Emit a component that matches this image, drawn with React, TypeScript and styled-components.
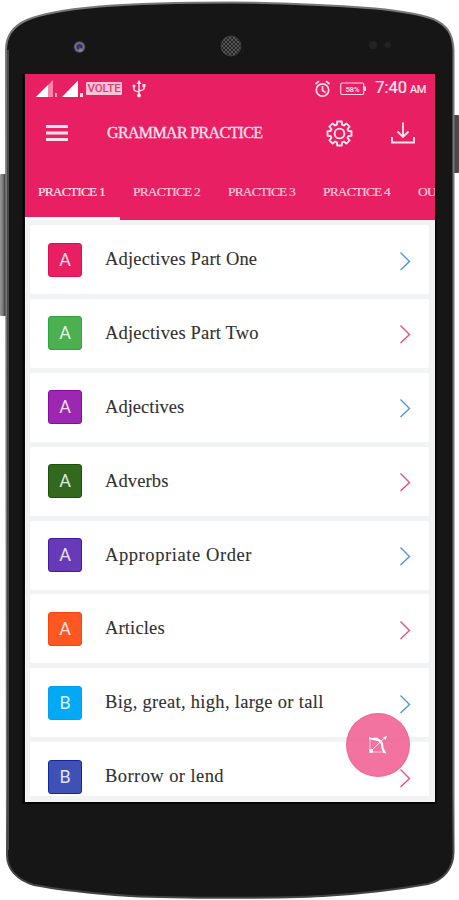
import React from "react";
import styled, { createGlobalStyle } from "styled-components";

const GlobalStyle = createGlobalStyle`
  * { box-sizing: border-box; }
  body { margin: 0; background: #fff; overflow: hidden; }
`;

const PINK = "#e91f63";

const Stage = styled.main`
  position: relative;
  width: 459px;
  height: 900px;
  padding: 74px 24px 0 25px;
  overflow: hidden;
  background: #fff;
`;

/* The handset lies behind the screen. */
const Handset = styled.svg`
  position: absolute;
  inset: 0;
`;

const Screen = styled.section`
  position: relative;
  display: flex;
  flex-direction: column;
  width: 410px;
  height: 728px;
  overflow: hidden;
  background: #f1f3f4;
  font-family: "Liberation Serif", serif;
`;

const Header = styled.header`
  display: flex;
  flex-direction: column;
  flex: none;
  height: 146px;
  background: ${PINK};
  color: #ffe3ec;
`;

const StatusBar = styled.div`
  display: flex;
  align-items: center;
  justify-content: space-between;
  height: 29px;
  padding: 0 9px 0 11px;
`;

const StatusGroup = styled.div<{ $gap: number; $indent?: number }>`
  display: flex;
  align-items: center;
  gap: ${(p) => p.$gap}px;
  padding-left: ${(p) => p.$indent ?? 0}px;
`;

const NetworkBadge = styled.span`
  width: 36px;
  height: 13px;
  border-radius: 1px;
  background: #fbc3d6;
  color: #e23b74;
  font: 500 11.5px/13.5px Roboto, sans-serif;
  letter-spacing: -0.1px;
  text-align: center;
`;

const Clock = styled.time`
  font: 400 16.5px/20px Roboto, sans-serif;
  letter-spacing: 0;
  color: #ffe9f0;
  -webkit-text-stroke: 0.2px;
`;

const Meridiem = styled.small`
  margin-left: 3px;
  font-size: 11px;
  letter-spacing: -0.4px;
`;

const Toolbar = styled.div`
  display: flex;
  align-items: center;
  height: 60px;
  padding: 0 20px 0 21px;
`;

const Title = styled.h1`
  flex: 1;
  margin: 0 0 0 39px;
  font-size: 16px;
  font-weight: 400;
  line-height: 20px;
  letter-spacing: -0.65px;
  -webkit-text-stroke: 0.3px;
  white-space: nowrap;
`;

const IconButton = styled.button<{ $right?: number }>`
  display: flex;
  margin: 0 ${(p) => p.$right ?? 0}px 0 0;
  padding: 0;
  border: 0;
  background: none;
  color: inherit;
`;

const Tabs = styled.nav`
  display: flex;
  flex: 1;
  overflow: hidden;
`;

const Tab = styled.button<{ $active?: boolean }>`
  flex: none;
  width: 95px;
  padding: 4px 0 0 13px;
  border: 0;
  border-bottom: 3px solid ${(p) => (p.$active ? "#fff" : "transparent")};
  background: none;
  color: ${(p) => (p.$active ? "#ffe3ec" : "#fbcbdc")};
  font: 400 13.5px/16px "Liberation Serif", serif;
  letter-spacing: -0.85px;
  text-align: left;
  white-space: nowrap;
  -webkit-text-stroke: 0.2px;
`;

const List = styled.ul`
  display: flex;
  flex-direction: column;
  flex: none;
  gap: 4.9px;
  height: 571px;
  margin: 5px 6px 0 5px;
  padding: 0;
  overflow: hidden;
  list-style: none;
`;

const Card = styled.li`
  display: flex;
  flex: none;
  align-items: center;
  height: 69px;
  padding: 0 18px 0 18px;
  border-radius: 2px;
  background: #fff;
`;

const Tile = styled.span<{ $fill: string; $edge: string }>`
  display: flex;
  align-items: center;
  justify-content: center;
  width: 34px;
  height: 34px;
  border: 1px solid ${(p) => p.$edge};
  border-radius: 3px;
  background: ${(p) => p.$fill};
  color: rgba(255, 255, 255, 0.86);
  font: 400 18px/20px Roboto, sans-serif;
`;

const Label = styled.span<{ $track: number }>`
  flex: 1;
  margin-top: -1px;
  padding-left: 23px;
  color: #303030;
  font-size: 18.5px;
  line-height: 22px;
  letter-spacing: ${(p) => p.$track}px;
  white-space: nowrap;
  -webkit-text-stroke: 0.1px;
`;

const Chevron = styled.svg<{ $color: string }>`
  flex: none;
  width: 12px;
  height: 20px;
  margin-top: 2px;
  fill: none;
  stroke: ${(p) => p.$color};
  stroke-width: 1.4;
`;

const Fab = styled.button`
  position: absolute;
  right: 25px;
  bottom: 25px;
  display: flex;
  align-items: center;
  justify-content: center;
  width: 64px;
  height: 64px;
  padding: 0;
  border: 1px solid rgba(240, 88, 139, 0.5);
  border-radius: 50%;
  background: rgba(238, 76, 132, 0.78);
`;

const topics = [
  { name: "Adjectives Part One", fill: "#e91f63", edge: "#df0c58", track: 0.17 },
  { name: "Adjectives Part Two", fill: "#4caf50", edge: "#2da73a", track: 0.17 },
  { name: "Adjectives", fill: "#9c27b0", edge: "#8c08a4", track: 0.02 },
  { name: "Adverbs", fill: "#33691e", edge: "#1d5208", track: 0.12 },
  { name: "Appropriate Order", fill: "#673ab7", edge: "#4916a3", track: 0.58 },
  { name: "Articles", fill: "#ff5722", edge: "#fb430b", track: 0.15 },
  { name: "Big, great, high, large or tall", fill: "#03a9f4", edge: "#03a0ec", track: 0.3 },
  { name: "Borrow or lend", fill: "#3f51b5", edge: "#1525a0", track: 0.43 },
];

const tabs = ["PRACTICE 1", "PRACTICE 2", "PRACTICE 3", "PRACTICE 4", "OUR APPS"];

const bodyPath =
  "M7 855 L6 50 C6 36 13 26 27 20 C43 13 66 9.500 100 6.500 C145 3 185 2.500 230 2.500 C277 2.500 330 5 375 8.500 C400 11 420 14 433 19 C447 25 453 34 453.500 50 V853 C453 868 444 880 428 884 C400 889 370 893 330 895.500 C290 898.500 180 898.500 130 896 C95 893.500 60 890 34 885 C17 880 7 869 7 855 Z";

function Phone() {
  return (
    <Handset viewBox="0 0 459 900" width="459" height="900" aria-hidden="true">
      <defs>
        <linearGradient id="key" x1="0" x2="1" y1="0" y2="0">
          <stop offset="0" stopColor="#999" />
          <stop offset="0.5" stopColor="#777" />
          <stop offset="1" stopColor="#222" />
        </linearGradient>
        <linearGradient id="rim" x1="0" x2="0" y1="0" y2="1">
          <stop offset="0" stopColor="#777" />
          <stop offset="0.88" stopColor="#777" />
          <stop offset="0.96" stopColor="#444" />
        </linearGradient>
        <radialGradient id="lens">
          <stop offset="0" stopColor="#4a3fa0" />
          <stop offset="0.35" stopColor="#2b2560" />
          <stop offset="0.65" stopColor="#77788a" />
          <stop offset="1" stopColor="#333" />
        </radialGradient>
        <pattern id="mesh" width="4" height="4" patternUnits="userSpaceOnUse">
          <rect width="4" height="4" fill="#252525" />
          <path d="M0 0 L4 4 M4 0 L0 4" stroke="#626262" strokeWidth="0.8" />
        </pattern>
      </defs>
      <rect x="0" y="174" width="6" height="142" rx="1" fill="url(#key)" />
      <rect x="453" y="115" width="6" height="58" rx="1" fill="#4a4a4a" />
      <path d={bodyPath} fill="#161616" stroke="url(#rim)" strokeWidth="2" />
      <path d="M8 50 V850" fill="none" stroke="#484848" strokeWidth="2" />
      <path d="M23.500 74 V803 H435.500 V74" fill="none" stroke="#050505" strokeWidth="2" />
      <circle cx="79.500" cy="47" r="6" fill="url(#lens)" />
      <circle cx="80.500" cy="50" r="2" fill="#9a9aa8" opacity="0.6" />
      <circle cx="231" cy="46" r="10" fill="url(#mesh)" stroke="#444" strokeWidth="0.8" />
      <circle cx="373" cy="45" r="4" fill="#232323" />
      <circle cx="387.500" cy="45" r="3" fill="#222" />
    </Handset>
  );
}

function Signals() {
  return (
    <svg width="48" height="18" viewBox="0 0 48 18">
      <path d="M0 17 L17 0 V17 Z" fill="#f486ac" />
      <path d="M0 17 L12 5 V17 Z" fill="#fff" />
      <path d="M20 13 V17" stroke="#ffd0df" strokeWidth="1.500" />
      <path d="M26 17 L42 0.500 V17 Z" fill="#fff" />
      <rect x="44" y="13" width="3" height="4" fill="#ffdce7" />
    </svg>
  );
}

function Usb() {
  return (
    <svg width="14" height="18" viewBox="0 0 14 18" fill="none" stroke="#ffe1eb" strokeWidth="1.500">
      <path d="M7 3 V15 M2 6 V9.500 Q2 11 7 12 M12 6 V8.500 Q12 10 7 11" />
      <path d="M4.500 4 L7 0 L9.500 4 Z" fill="#ffe1eb" stroke="none" />
      <circle cx="7" cy="15.500" r="2" fill="#ffe1eb" stroke="none" />
      <circle cx="2" cy="6" r="1.500" fill="#ffe1eb" stroke="none" />
      <rect x="10.500" y="4" width="3" height="3" fill="#ffe1eb" stroke="none" />
    </svg>
  );
}

function Alarm() {
  return (
    <svg width="17" height="18" viewBox="0 0 16 18" fill="none" stroke="#ffdce8" strokeWidth="1.700">
      <circle cx="8" cy="10" r="6.200" />
      <path d="M8 6 V10.500 L11 12.500 M1 4 L4.500 1.200 M15 4 L11.500 1.200" />
    </svg>
  );
}

function Battery() {
  return (
    <svg width="27" height="14" viewBox="0 0 27 14">
      <rect x="0.700" y="1" width="23" height="11.500" rx="1.500" fill="none" stroke="#ffd3e1" strokeWidth="1.200" />
      <path d="M25 4.500 V9" stroke="#ffd3e1" strokeWidth="2" />
      <text x="12.300" y="9.700" textAnchor="middle" fontFamily="Roboto, sans-serif" fontWeight="700" fontSize="8" letterSpacing="-0.500" fill="#ffd3e1">58%</text>
    </svg>
  );
}

function Gear() {
  const points: string[] = [];
  for (let i = 0; i < 8; i++) {
    const middle = (i * Math.PI) / 4 - Math.PI / 2;
    [[-0.28, 9.2], [-0.19, 12.2], [0.19, 12.2], [0.28, 9.2]].forEach(([turn, radius]) => {
      points.push(`${13.5 + radius * Math.cos(middle + turn)},${13.5 + radius * Math.sin(middle + turn)}`);
    });
  }
  return (
    <svg width="27" height="27" viewBox="0 0 27 27" fill="none" stroke="currentColor" strokeWidth="1.900" strokeLinejoin="round">
      <polygon points={points.join(" ")} />
      <circle cx="13.500" cy="13.500" r="4.900" />
    </svg>
  );
}

export default function App() {
  return (
    <>
      <GlobalStyle />
      <Stage>
        <Phone />
        <Screen>
          <Header>
            <StatusBar>
              <StatusGroup $gap={2}>
                <Signals />
                <NetworkBadge>VOLTE</NetworkBadge>
                <StatusGroup $gap={0} $indent={8}>
                  <Usb />
                </StatusGroup>
              </StatusGroup>
              <StatusGroup $gap={8.5}>
                <Alarm />
                <Battery />
                <Clock>7:40<Meridiem>AM</Meridiem></Clock>
              </StatusGroup>
            </StatusBar>
            <Toolbar>
              <IconButton aria-label="Menu">
                <svg width="22" height="18" viewBox="0 0 22 18" stroke="currentColor" strokeWidth="2.800">
                  <path d="M0 2.500 H22 M0 9 H22 M0 15.500 H22" />
                </svg>
              </IconButton>
              <Title>GRAMMAR PRACTICE</Title>
              <IconButton aria-label="Settings" $right={38}>
                <Gear />
              </IconButton>
              <IconButton aria-label="Download">
                <svg width="24" height="22" viewBox="0 0 24 22" fill="none" stroke="currentColor" strokeWidth="1.900">
                  <path d="M12 0.500 V14.500 M6.500 9.500 L12 15 L17.500 9.500 M1 15 V20.500 H23 V15" />
                </svg>
              </IconButton>
            </Toolbar>
            <Tabs>
              {tabs.map((name, i) => (
                <Tab key={name} $active={i === 0}>{name}</Tab>
              ))}
            </Tabs>
          </Header>
          <List>
            {topics.map((topic, i) => (
              <Card key={topic.name}>
                <Tile $fill={topic.fill} $edge={topic.edge}>{topic.name[0]}</Tile>
                <Label $track={topic.track}>{topic.name}</Label>
                <Chevron $color={i % 2 === 0 ? "#4b96e0" : "#ee4d7f"} viewBox="0 0 12 20">
                  <path d="M1.500 1.500 L10.500 10.500 L1.500 19" />
                </Chevron>
              </Card>
            ))}
          </List>
          <Fab aria-label="Practice target">
            <svg width="20" height="20" viewBox="0 0 20 20" fill="none" stroke="#fff">
              <path d="M1 2 L4 3 L9 2.500 L12 4.500 L15 8 L15.500 13 L18.500 18.500 L15.500 18 L13.500 13.500 L13 9 L10 6 L4.500 5 L1 4 Z" fill="#fff" stroke="none" />
              <path d="M2 3 V17 H17" strokeWidth="0.800" opacity="0.8" />
              <path d="M3 16 L17.500 2" strokeWidth="1" />
              <path d="M1.500 14 L5 14 L5 17.500 L1.500 18 Z M15 2.500 L19 1 L17.500 5 Z" fill="#fff" stroke="none" />
            </svg>
          </Fab>
        </Screen>
      </Stage>
    </>
  );
}
